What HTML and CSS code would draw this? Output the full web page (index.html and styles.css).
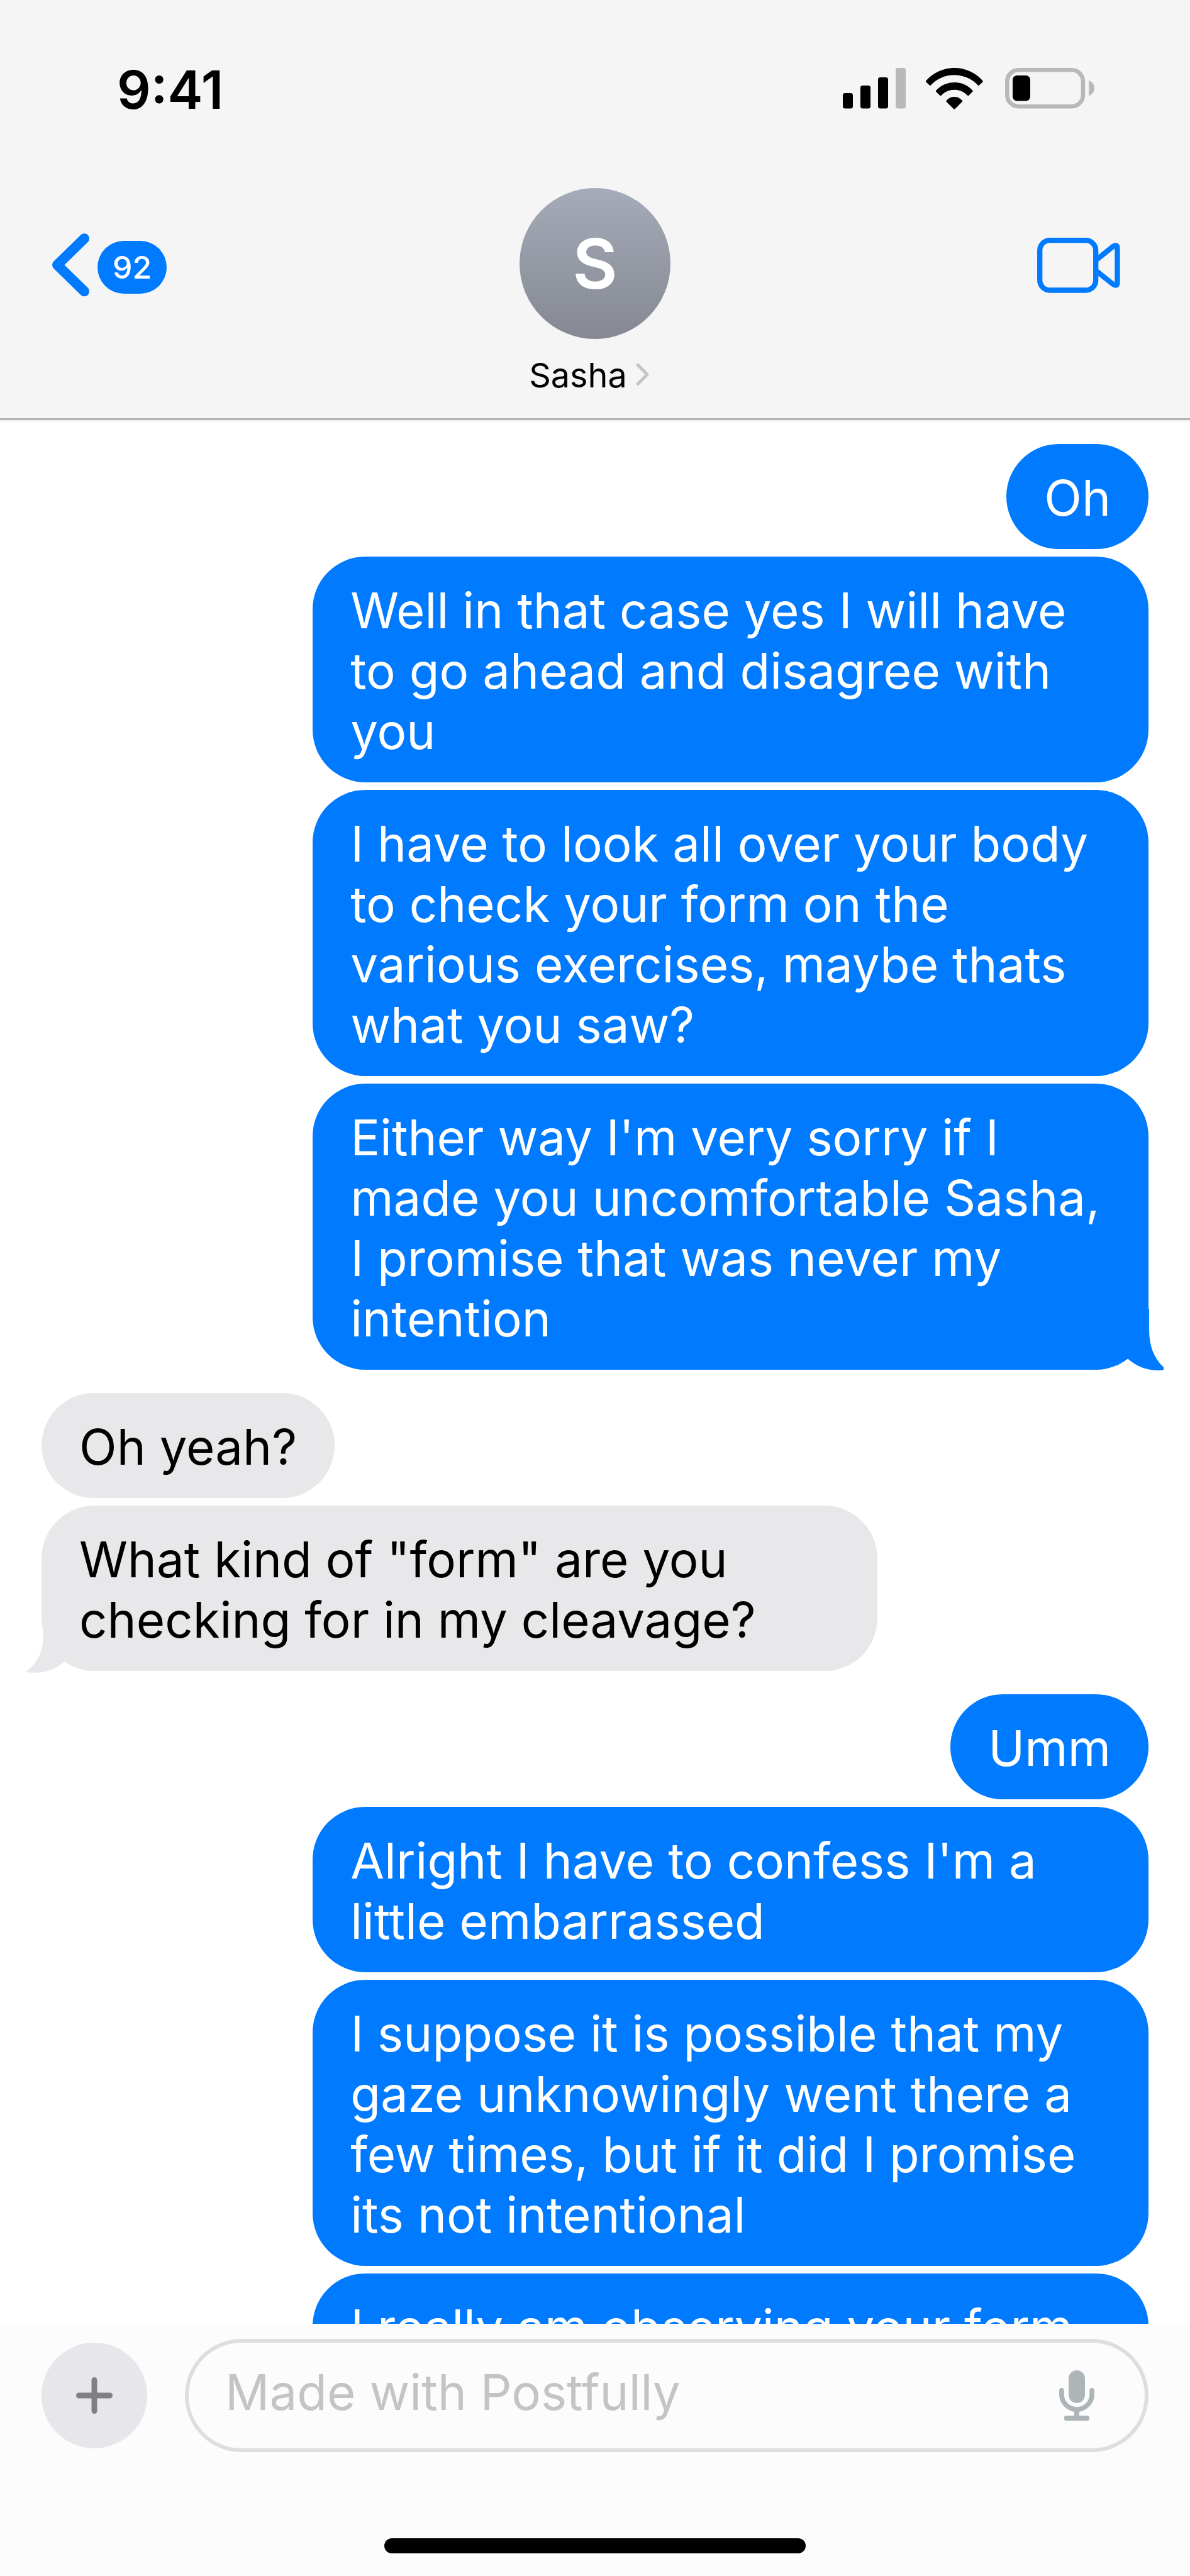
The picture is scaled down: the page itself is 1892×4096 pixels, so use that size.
FILE: index.html
```html
<!DOCTYPE html>
<html lang="en">
<head>
<meta charset="utf-8">
<meta name="viewport" content="width=device-width, initial-scale=1">
<title>Sasha</title>
<link rel="stylesheet" href="styles.css">
</head>
<body>
<header class="header">
  <div class="status">
    <span class="time">9:41</span>
    <div class="status-icons">
      <svg width="100" height="70" viewBox="0 0 100 70" aria-hidden="true">
        <rect x="0" y="40" width="16" height="24.5" rx="3.5"/>
        <rect x="28" y="28" width="16" height="36.5" rx="3.5"/>
        <rect x="56" y="15" width="16" height="49.5" rx="3.5"/>
        <rect x="84" y="0" width="16" height="64.5" rx="3.5" fill="#b8b8b8"/>
      </svg>
      <svg class="wifi" width="91" height="70" viewBox="0 0 91 70" aria-hidden="true">
        <path d="M.6 20A60 60 0 0 1 90.1 20Q91.3 21.3 90.2 22.5L84.9 27.6Q83.8 28.4 82.8 27.4A51.500 51.500 0 0 0 7.900 27.400Q6.800 28.400 5.800 27.600L.5 22.500Q-.6 21.300 .6 20Z"/>
        <path d="M16.500 35.700A39 39 0 0 1 74.200 35.700Q75.400 36.700 74.300 37.800L68.300 43.700Q67.300 44.700 66.100 43.800A28.300 28.300 0 0 0 24.500 43.800Q23.300 44.700 22.300 43.700L16.300 37.800Q15.300 36.700 16.500 35.700Z"/>
        <path d="M33.300 51.300A16.200 16.200 0 0 1 57.300 51.300Q59 52.700 57.500 54.200L46.300 65.200Q45.300 66 44.300 65.200L33.100 54.200Q31.600 52.700 33.300 51.300Z"/>
      </svg>
      <svg class="battery" width="142" height="70" viewBox="0 0 142 70" aria-hidden="true">
        <rect x="3.300" y="3.300" width="120.600" height="57.900" rx="18" fill="none" stroke="#b8b8b8" stroke-width="6.600"/>
        <path d="M133 19.800C138.500 22 142 27 142 32.200C142 37.400 138.500 42.400 133 44.600Z" fill="#b8b8b8"/>
        <rect x="12" y="12" width="28" height="40.500" rx="7"/>
      </svg>
    </div>
  </div>
  <nav class="nav">
    <button class="back" type="button" aria-label="Back, 92 unread">
      <svg width="60" height="108" viewBox="0 0 60 108" aria-hidden="true">
        <path d="M51 8.300L8 50.300L51 92.300" fill="none" stroke="#007aff" stroke-width="16" stroke-linecap="round" stroke-linejoin="round"/>
      </svg>
      <span class="badge">92</span>
    </button>
    <button class="contact" type="button">
      <span class="avatar">S</span>
      <span class="name">Sasha<svg width="54" height="66" viewBox="0 0 54 66" aria-hidden="true"><path d="M17.200 16.500L32 31.400L17.200 46.300" fill="none" stroke="#c4c4c6" stroke-width="5" stroke-linecap="round" stroke-linejoin="round"/></svg></span>
    </button>
    <button class="video" type="button" aria-label="Video call">
      <svg width="132" height="94" viewBox="0 0 132 94" aria-hidden="true">
        <g fill="none" stroke="#007aff" stroke-width="8.300">
          <rect x="4.200" y="4.200" width="89" height="79.300" rx="16"/>
          <path d="M95 34.500L120 14.400Q127.500 9 127.500 17V71Q127.500 79 120 73.400L95 53.500"/>
        </g>
      </svg>
    </button>
  </nav>
</header>
<main class="messages">
  <div class="group sent">
    <p class="bubble">Oh</p>
    <p class="bubble">Well in that case yes I will have to go ahead and disagree with you</p>
    <p class="bubble">I have to look all over your body to check your form on the various exercises, maybe thats what you saw?</p>
    <p class="bubble">Either way I'm very sorry if I made you uncomfortable Sasha, I promise that was never my intention
      <svg class="tail" width="64" height="100" viewBox="0 0 64 100" aria-hidden="true"><path d="M0 0H41V33C41 58 48 78 64 93V97.500C38 100 20 91 6.500 79L0 60Z"/></svg>
    </p>
  </div>
  <div class="group received">
    <p class="bubble">Oh yeah?</p>
    <p class="bubble">What kind of "form" are you checking for in my cleavage?
      <svg class="tail" width="64" height="100" viewBox="0 0 64 100" aria-hidden="true"><path d="M24.500 15C27 32 28 50 23 66C19 79 11 89 0 97.500V99C24 102 44 97 60 82L64 60V0Z"/></svg>
    </p>
  </div>
  <div class="group sent">
    <p class="bubble">Umm</p>
    <p class="bubble">Alright I have to confess I'm a little embarrassed</p>
    <p class="bubble">I suppose it is possible that my gaze unknowingly went there a few times, but if it did I promise its not intentional</p>
    <p class="bubble bubble-wide">I really am observing your form</p>
  </div>
</main>
<footer class="footer">
  <form class="composer">
    <button class="add" type="button" aria-label="Add attachment">
      <svg width="60" height="60" viewBox="0 0 60 60" aria-hidden="true"><path d="M30 5.500V54.500M5.500 30H54.500" stroke="#7f7f84" stroke-width="9" stroke-linecap="round"/></svg>
    </button>
    <div class="field">
      <input class="input" type="text" placeholder="Made with Postfully" aria-label="Message">
      <button class="mic" type="button" aria-label="Dictate">
        <svg width="56" height="80" viewBox="0 0 56 80" fill="#adb5b8" aria-hidden="true">
          <rect x="15" y="0" width="26" height="52" rx="13"/>
          <path d="M3.900 31.800V38A24.100 24.100 0 0 0 52.100 38V31.800" fill="none" stroke="#adb5b8" stroke-width="7.600" stroke-linecap="round"/>
          <rect x="24" y="62" width="8" height="12"/>
          <rect x="8" y="72" width="40" height="8" rx="3"/>
        </svg>
      </button>
    </div>
  </form>
  <div class="home-bar"></div>
</footer>
</body>
</html>
```
FILE: styles.css
```css
* {
  box-sizing: border-box;
}

body {
  margin: 0;
  height: 100vh;
  display: flex;
  flex-direction: column;
  overflow: hidden;
  background: #fff;
  color: #000;
  font-family: Inter, "Liberation Sans", sans-serif;
  font-size: 78px;
  line-height: 96px;
}

button {
  margin: 0;
  padding: 0;
  border: 0;
  background: none;
  color: inherit;
  font: inherit;
}

svg {
  display: block;
  flex: none;
}

.header {
  flex: none;
  padding-bottom: 3px;
  background: #f5f5f5;
}

.status {
  display: flex;
  align-items: center;
  justify-content: space-between;
  padding: 92px 152px 0 186px;
}

.time {
  font-size: 84px;
  font-weight: 600;
  line-height: 102px;
}

.status-icons {
  display: flex;
}

.wifi {
  margin-left: 32px;
}

.battery {
  margin-left: 35px;
}

.nav {
  display: grid;
  grid-template-columns: 1fr auto 1fr;
  align-items: start;
  padding: 105px 0 35px;
  border-bottom: 3px solid #b3b3b3;
}

.back,
.video {
  display: flex;
  align-items: center;
  height: 108px;
  margin-top: 72px;
}

.back {
  justify-self: start;
  gap: 12px;
  margin-left: 83px;
}

.video {
  justify-self: end;
  margin-right: 111px;
}

.badge {
  padding: 0 24px;
  border-radius: 42px;
  background: #007aff;
  color: #fff;
  font-size: 50px;
  font-weight: 500;
  line-height: 84px;
}

.contact {
  display: flex;
  flex-direction: column;
  align-items: center;
  gap: 25px;
}

.avatar {
  width: 240px;
  border-radius: 50%;
  background: linear-gradient(#a5abb9, #858891);
  color: #fff;
  font-size: 110px;
  font-weight: 600;
  line-height: 240px;
}

.name {
  display: flex;
  font-size: 54px;
  line-height: 66px;
}

.messages {
  flex: 1;
  min-height: 0;
  overflow: hidden;
  display: flex;
  flex-direction: column;
  gap: 37px;
  padding: 35px 66px 0;
}

.group {
  flex: none;
  display: flex;
  flex-direction: column;
  gap: 12px;
}

.sent {
  align-items: flex-end;
}

.received {
  align-items: flex-start;
}

.bubble {
  position: relative;
  max-width: 75.5%;
  margin: 0;
  padding: 38px 60px 33px;
  border-radius: 84px;
}

.bubble-wide {
  width: 100%;
}

.sent .bubble {
  background: #007aff;
  color: #fff;
}

.received .bubble {
  background: #e8e8ea;
}

.tail {
  position: absolute;
  bottom: -3px;
}

.sent .tail {
  right: -24px;
  fill: #007aff;
}

.received .tail {
  left: -24px;
  fill: #e8e8ea;
}

.footer {
  flex: none;
  padding: 24px 66px 36px;
  background: #fcfcfc;
}

.composer {
  display: flex;
  align-items: center;
  gap: 60px;
}

.add {
  flex: none;
  display: flex;
  align-items: center;
  justify-content: center;
  width: 168px;
  height: 168px;
  border-radius: 50%;
  background: #e7e6eb;
}

.field {
  flex: 1;
  display: flex;
  align-items: center;
  height: 180px;
  padding: 0 80px 0 58px;
  border: 6px solid #dedede;
  border-radius: 90px;
}

.input {
  flex: 1;
  min-width: 0;
  padding: 0 0 10px;
  border: 0;
  outline: 0;
  background: none;
  color: #000;
  font: inherit;
}

.input::placeholder {
  color: #c2c4c5;
  opacity: 1;
}

.home-bar {
  width: 670px;
  height: 24px;
  margin: 137px auto 0;
  border-radius: 12px;
  background: #000;
}
```
